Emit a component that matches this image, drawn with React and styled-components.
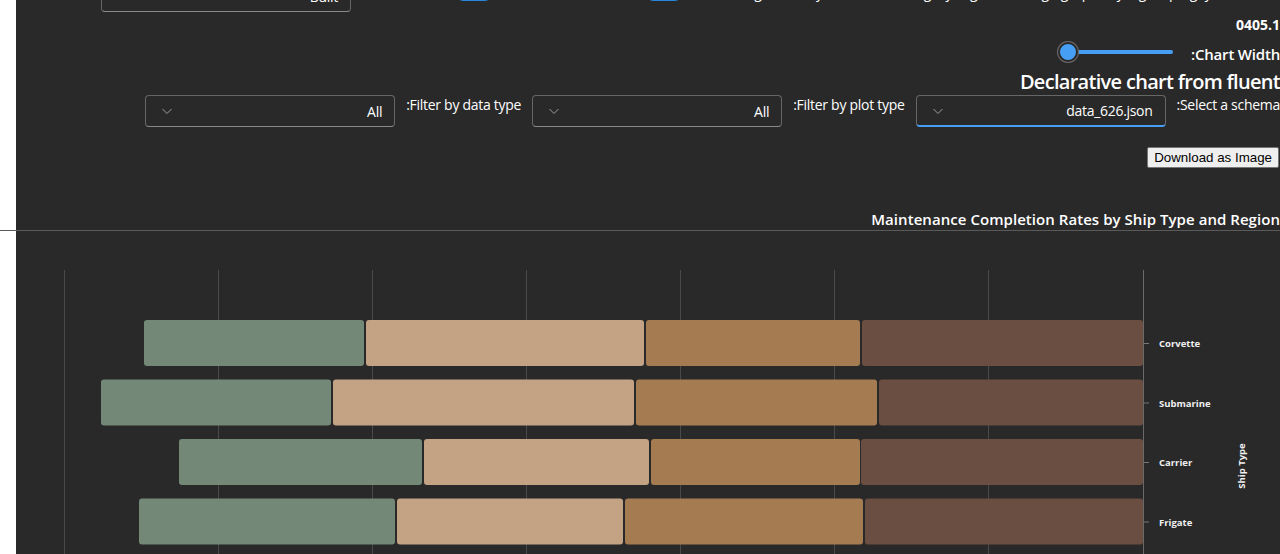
import React from 'react';
import styled, { createGlobalStyle } from 'styled-components';

const GlobalStyle = createGlobalStyle`
  html, body {
    margin: 0;
    padding: 0;
    background: #ffffff;
    overflow: hidden;
  }
  body {
    font-family: 'Open Sans', 'Noto Sans', sans-serif;
  }
`;

const Page = styled.div`
  display: flow-root;
  margin-left: 16px;
  min-height: 554px;
  background: #292929;
  color: #ffffff;
  direction: rtl;
`;

const TopRow = styled.div`
  display: flex;
  align-items: flex-end;
  height: 32px;
  margin-top: -20px;
  padding-right: 43px;
`;

const TopLabel = styled.span`
  font-size: 14px;
  line-height: 20px;
  margin-bottom: 9px;
  white-space: nowrap;
`;

const Switch = styled.span`
  flex: none;
  width: 40px;
  height: 20px;
  border-radius: 10px;
  background: #2886de;
  margin-bottom: 11px;
  margin-right: ${p => p.$gap}px;
`;

const Version = styled.div`
  margin-top: 3px;
  font-size: 14px;
  line-height: 20px;
  font-weight: 700;
`;

const SliderRow = styled.div`
  display: flex;
  align-items: center;
  gap: 18px;
  height: 33px;
`;

const SliderLabel = styled.span`
  font-size: 15px;
  font-weight: 600;
  letter-spacing: -0.2px;
  padding-top: 5px;
`;

const SliderTrack = styled.div`
  position: relative;
  width: 104px;
  height: 4px;
  border-radius: 2px;
  background: #479ef5;
`;

const SliderThumb = styled.span`
  position: absolute;
  left: -11px;
  top: -8px;
  width: 16px;
  height: 16px;
  border-radius: 50%;
  background: #479ef5;
  border: 2px solid #292929;
  box-shadow: 0 0 0 1px #6b6b6b;
`;

const Heading = styled.h2`
  margin: 0;
  font-size: 20px;
  line-height: 28px;
  font-weight: 600;
  letter-spacing: -0.7px;
  white-space: nowrap;
`;

const FilterRow = styled.div`
  display: flex;
  align-items: flex-start;
  gap: 11px;
  margin-top: -1px;
`;

const FilterLabel = styled.label`
  font-size: 14px;
  line-height: 20px;
  letter-spacing: -0.28px;
  white-space: nowrap;
`;

const Dropdown = styled.div`
  flex: none;
  display: flex;
  align-items: center;
  justify-content: space-between;
  box-sizing: border-box;
  width: 250px;
  height: 32px;
  padding: 0 12px 0 15px;
  border: 1px solid #666666;
  border-bottom: ${p => (p.$active ? '2px solid #479ef5' : '1px solid #8a8a8a')};
  border-radius: 4px;
  background: #292929;
  font-size: 14px;
  letter-spacing: -0.3px;
  color: #ffffff;
  margin-right: ${p => p.$gap || 0}px;
`;

const Chevron = () => (
  <svg width="12" height="12" viewBox="0 0 12 12">
    <path d="M1.5 4 L6 8.5 L10.5 4" fill="none" stroke="#9e9e9e" strokeWidth="1" />
  </svg>
);

const ButtonRow = styled.div`
  display: flex;
  margin-top: 20px;
  padding-right: 1px;
`;

const DownloadButton = styled.button`
  direction: ltr;
  font-family: 'Liberation Sans', Arial, sans-serif;
  font-size: 13.33px;
  height: 21px;
  padding: 1px 6px;
  color: #000000;
  background: #efefef;
  border: 1px solid #767676;
  border-radius: 2px;
`;

const ChartTitle = styled.div`
  margin-top: 41px;
  font-size: 15px;
  line-height: 20px;
  font-weight: 600;
  letter-spacing: 0.05px;
  white-space: nowrap;
`;

const Divider = styled.div`
  margin-left: -16px;
  margin-top: 1px;
  height: 1px;
  background: #5a5a5a;
`;

const ChartSvg = styled.svg`
  display: block;
  direction: ltr;
`;

const COLORS = ['#748877', '#c4a385', '#a57c52', '#6a4e41'];

const ROWS = [
  { name: 'Corvette', edges: [144, 364, 366, 644, 646, 860, 862, 1143] },
  { name: 'Submarine', edges: [101, 331, 333, 634, 636, 877, 879, 1143] },
  { name: 'Carrier', edges: [179, 422, 424, 649, 651, 860, 861, 1143] },
  { name: 'Frigate', edges: [139, 395, 397, 623, 625, 863, 865, 1143] }
];

const GRID = [64, 218, 372, 526, 680, 834, 988];

// page coordinates -> svg (svg starts at x 16, y 231)
const X = v => v - 16;
const Y = v => v - 231;

const Chart = () => (
  <ChartSvg width="1264" height="330">
    {GRID.map(g => (
      <line key={g} x1={X(g) + 0.5} x2={X(g) + 0.5} y1={Y(270)} y2={330} stroke="#4a4a4a" />
    ))}
    {ROWS.map((row, i) => {
      const top = Y(320) + i * 59.5;
      return (
        <g key={row.name}>
          {[0, 1, 2, 3].map(s => (
            <rect
              key={s}
              x={X(row.edges[s * 2])}
              y={top}
              width={row.edges[s * 2 + 1] - row.edges[s * 2]}
              height={46}
              rx={3}
              fill={COLORS[s]}
            />
          ))}
          <line x1={X(1143)} x2={X(1149)} y1={top + 23.5} y2={top + 23.5} stroke="#777" />
          <text
            x={X(1159)}
            y={top + 27}
            fill="#f0f0f0"
            fontSize="9.5"
            fontWeight="700"
            fontFamily="'Open Sans', sans-serif"
          >
            {row.name}
          </text>
        </g>
      );
    })}
    <line x1={X(1143) + 0.5} x2={X(1143) + 0.5} y1={Y(270)} y2={330} stroke="#6a6a6a" />
    <text
      transform={`translate(${X(1245)}, ${Y(466)}) rotate(-90)`}
      textAnchor="middle"
      fill="#f0f0f0"
      fontSize="9.5"
      fontWeight="700"
      fontFamily="'Open Sans', sans-serif"
    >
      Ship Type
    </text>
  </ChartSvg>
);

const App = () => (
  <>
    <GlobalStyle />
    <Page>
      <TopRow>
        <TopLabel>Enable_gridlines_y axis, multi category_legend, change graph_style grouping, yaxis</TopLabel>
        <Switch $gap={20} />
        <Switch $gap={150} />
        <Dropdown $gap={103}>
          <span>Built</span>
          <Chevron />
        </Dropdown>
      </TopRow>

      <Version>0405.1</Version>

      <SliderRow>
        <SliderLabel>Chart Width:</SliderLabel>
        <SliderTrack>
          <SliderThumb />
        </SliderTrack>
      </SliderRow>

      <Heading>Declarative chart from fluent</Heading>

      <FilterRow>
        <FilterLabel>Select a schema:</FilterLabel>
        <Dropdown $active>
          <span>data_626.json</span>
          <Chevron />
        </Dropdown>
        <FilterLabel>Filter by plot type:</FilterLabel>
        <Dropdown>
          <span>All</span>
          <Chevron />
        </Dropdown>
        <FilterLabel>Filter by data type:</FilterLabel>
        <Dropdown>
          <span>All</span>
          <Chevron />
        </Dropdown>
      </FilterRow>

      <ButtonRow>
        <DownloadButton>Download as Image</DownloadButton>
      </ButtonRow>

      <ChartTitle>Maintenance Completion Rates by Ship Type and Region</ChartTitle>
      <Divider />
      <Chart />
    </Page>
  </>
);

export default App;
